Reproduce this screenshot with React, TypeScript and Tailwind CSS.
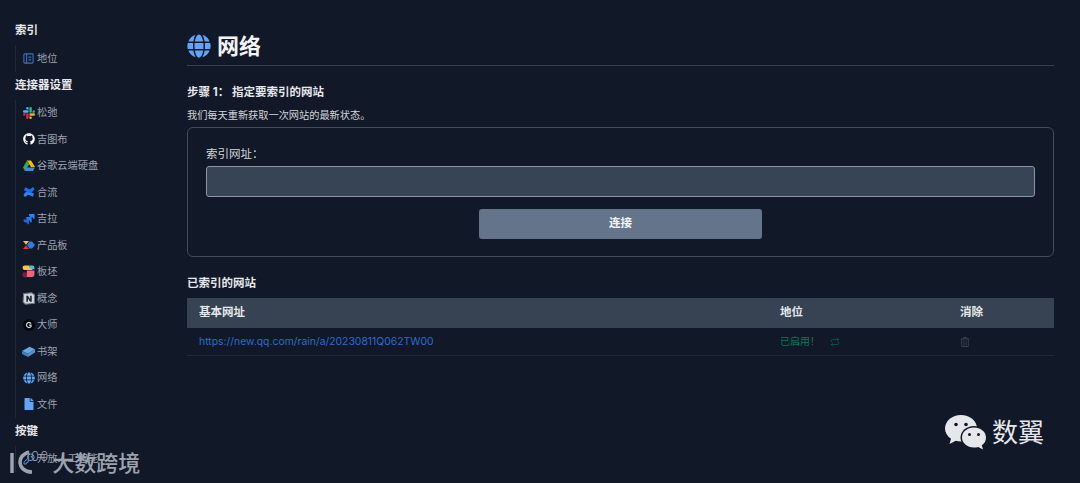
import React from 'react';
import { FaGithub, FaFile, FaGlobe, FaRegTrashAlt } from 'react-icons/fa';
import { Repeat, KeyRound } from 'lucide-react';

const StatusIcon = () => (
  <svg viewBox="0 0 12 12" className="w-[11px] h-[11px]" fill="none" stroke="#3b73b8" strokeWidth="1.200">
    <rect x="1" y="1" width="10" height="10" rx="1" />
    <path d="M4 1v10M6 4.500h3M6 7.500h3" />
  </svg>
);

const Slack = () => (
  <svg viewBox="0 0 24 24" className="w-[12px] h-[12px]">
    <path fill="#e01e5a" d="M5 15a2.5 2.5 0 1 1-2.500-2.500H5V15zm1.300 0a2.500 2.500 0 0 1 5 0v6.500a2.500 2.500 0 0 1-5 0V15z" />
    <path fill="#36c5f0" d="M8.800 5a2.500 2.500 0 1 1 2.500-2.500V5H8.800zm0 1.300a2.500 2.500 0 0 1 0 5H2.500a2.500 2.500 0 0 1 0-5h6.300z" />
    <path fill="#2eb67d" d="M19 8.800a2.500 2.500 0 1 1 2.500 2.500H19V8.800zm-1.300 0a2.500 2.500 0 0 1-5 0V2.500a2.500 2.500 0 0 1 5 0v6.300z" />
    <path fill="#ecb22e" d="M15.200 19a2.500 2.500 0 1 1-2.500 2.500V19h2.500zm0-1.300a2.500 2.500 0 0 1 0-5h6.300a2.500 2.500 0 0 1 0 5h-6.300z" />
  </svg>
);

const Drive = () => (
  <svg viewBox="0 0 24 22" className="w-[12px] h-[11px]">
    <path fill="#fbbc04" d="M8 1h8l8 13h-8z" />
    <path fill="#34a853" d="M8 1l4.500 7.500L4 22l-4-7z" />
    <path fill="#4285f4" d="M7 15h17l-4 7H3z" />
  </svg>
);

const Confluence = () => (
  <svg viewBox="0 0 24 24" className="w-[12px] h-[12px]">
    <path fill="#2684ff" d="M1 18c4-7 8-9 13-6.500l8 4-2.500 6-7-3.500c-2.500-1.200-4-.5-5.500 2L3.500 22z" />
    <path fill="#1d6fe6" d="M23 6c-4 7-8 9-13 6.500l-8-4 2.500-6 7 3.500c2.500 1.200 4 .5 5.500-2L20.500 2z" />
  </svg>
);

const Jira = () => (
  <svg viewBox="0 0 24 24" className="w-[12px] h-[12px]">
    <path fill="#2684ff" d="M12 2h11v10a4 4 0 0 1-4-4h-3a4 4 0 0 1-4-4z" />
    <path fill="#1f78f0" d="M6.500 8h11v11a4 4 0 0 1-4-4h-3a4 4 0 0 1-4-4z" />
    <path fill="#1868db" d="M1 13h11v10a4 4 0 0 1-4-4H5a4 4 0 0 1-4-4z" />
  </svg>
);

const Productboard = () => (
  <svg viewBox="0 0 24 24" className="w-[12px] h-[12px]">
    <path fill="#f6c141" d="M0 4h12l-6 7.500z" />
    <path fill="#e5343b" d="M0 20h12l-6-7.500z" />
    <path fill="#2f7de1" d="M13 5h5l6 7-6 7h-5l-5-7z" />
  </svg>
);

const Slab = () => (
  <svg viewBox="0 0 24 24" className="w-[13px] h-[13px]">
    <path fill="#f6c453" d="M5 1h9v3l5 0v5H5a4 4 0 0 1-4-4 4 4 0 0 1 4-4z" />
    <path fill="#43c2d6" d="M14 1h5a4 4 0 0 1 4 4v3h-7z" />
    <path fill="#7c1d3f" d="M1 14h9v9H5a4 4 0 0 1-4-4z" />
    <path fill="#f0647c" d="M9 10h14v8a4 4 0 0 1-4 4H9z" />
  </svg>
);

const Notion = () => (
  <svg viewBox="0 0 24 24" className="w-[13px] h-[13px]">
    <path fill="#d1d5db" stroke="#6b7280" strokeWidth="2" d="M3 3l15-1.500L23 5v16l-17 1.500L2 18z" />
    <path fill="#1f2937" d="M8 7h3l4 6V7h3v11h-3l-4-6v6H8z" />
  </svg>
);

const Guru = () => (
  <svg viewBox="0 0 24 24" className="w-[12px] h-[12px]">
    <circle cx="12" cy="12" r="12" fill="#05070c" />
    <path fill="none" stroke="#cbd5e1" strokeWidth="2.500" d="M16 9a5 5 0 1 0 0 6v-3h-4" />
  </svg>
);

const Bookstack = () => (
  <svg viewBox="0 0 24 24" className="w-[13px] h-[13px]">
    <path fill="#6ba6e0" d="M0 11l14-8 10 5-13 8z" />
    <path fill="#3f80c8" d="M0 11l11 5v6L1 17a3 3 0 0 1-1-2z" />
    <path fill="#4f91d6" d="M11 16l13-8v6l-13 8z" />
  </svg>
);

const WeChat = () => (
  <svg viewBox="0 0 42 36" className="w-[42px] h-[36px]">
    <path fill="#e5e7eb" d="M16 0C7.500 0 0 5.800 0 13.500c0 4.300 2.400 7.800 6 10.300L4.500 29l6.300-3.300c1.600.4 3.300.7 5.200.7C25 26.400 32 20.500 32 13.200 32 5.800 24.500 0 16 0z" />
    <path fill="#111827" d="M29 11c-7.500 0-13.500 5-13.500 11.500S21.500 34 29 34c9 0 13-5.500 13-11.500S36.500 11 29 11z" />
    <path fill="#e5e7eb" d="M29 12.500c-6.800 0-12 4.400-12 10s5.200 10 12 10c1.500 0 2.900-.2 4.200-.6l4.800 2.600-1.200-4.200C39.600 28.500 41 25.700 41 22.500c0-5.600-5.200-10-12-10z" />
    <circle cx="11" cy="9.500" r="1.800" fill="#111827" />
    <circle cx="21" cy="9.500" r="1.800" fill="#111827" />
    <circle cx="24.500" cy="19.500" r="1.500" fill="#111827" />
    <circle cx="33.500" cy="19.500" r="1.500" fill="#111827" />
  </svg>
);

const indexItems = [{ label: '地位', icon: <StatusIcon /> }];

const connectorItems = [
  { label: '松弛', icon: <Slack /> },
  { label: '吉图布', icon: <FaGithub size={12} className="text-white" /> },
  { label: '谷歌云端硬盘', icon: <Drive /> },
  { label: '合流', icon: <Confluence /> },
  { label: '吉拉', icon: <Jira /> },
  { label: '产品板', icon: <Productboard /> },
  { label: '板坯', icon: <Slab /> },
  { label: '概念', icon: <Notion /> },
  { label: '大师', icon: <Guru /> },
  { label: '书架', icon: <Bookstack /> },
  { label: '网络', icon: <FaGlobe size={12} className="text-[#60a5fa]" /> },
  { label: '文件', icon: <FaFile size={12} className="text-[#60a5fa]" /> },
];

const keyItems = [{ label: '开放人工智能', icon: <KeyRound size={12} className="text-[#60a5fa]" /> }];

const SideGroup = ({ title, items }: { title: string; items: { label: string; icon: React.ReactNode }[] }) => (
  <div>
    <div className="h-[28px] flex items-center text-[11.500px] font-bold text-[#e5e7eb]">{title}</div>
    <div className="border-l border-[#1f2937]">
      {items.map(item => (
        <div key={item.label} className="h-[26.500px] flex items-center pl-[6px] gap-[2px] text-[10.200px] text-[#9ca3af]">
          <span className="w-[13px] flex justify-center">{item.icon}</span>
          {item.label}
        </div>
      ))}
    </div>
  </div>
);

export default function App() {
  return (
    <div
      className="relative w-[1080px] h-[483px] overflow-hidden bg-[#111827] flex"
      style={{ fontFamily: 'Inter, "Noto Sans CJK SC", sans-serif' }}
    >
      {/* Sidebar */}
      <div className="w-[187px] shrink-0 pl-[15px] pt-[17px]">
        <SideGroup title="索引" items={indexItems} />
        <SideGroup title="连接器设置" items={connectorItems} />
        <SideGroup title="按键" items={keyItems} />
      </div>

      {/* Main */}
      <div className="w-[867px] pt-[32px]">
        <div className="flex items-center gap-[6px] h-[28px] mb-[5px] text-[22px] font-bold text-[#f3f4f6]">
          <FaGlobe size={24} className="text-[#60a5fa]" />
          网络
        </div>
        <div className="border-t border-[#374151]" />

        <div className="mt-[18px] text-[11.500px] font-bold text-[#e5e7eb] leading-[16px]">步骤 1： 指定要索引的网站</div>
        <div className="mt-[8px] text-[10.200px] text-[#d1d5db] leading-[14px]">我们每天重新获取一次网站的最新状态。</div>

        <div className="mt-[5px] h-[130px] border border-[#414b5a] rounded-[6px] px-[18px] pt-[18px]">
          <div className="text-[11.500px] text-[#d1d5db] leading-[16px]">索引网址：</div>
          <div className="mt-[4px] h-[31px] bg-[#364456] border border-[#8b95a3] rounded-[3px]" />
          <div className="mt-[12px] flex justify-center">
            <button className="w-[283px] h-[30px] bg-[#64748b] rounded-[3px] text-[11.500px] font-bold text-[#f3f4f6]">连接</button>
          </div>
        </div>

        <div className="mt-[18px] text-[11.500px] font-bold text-[#e5e7eb] leading-[16px]">已索引的网站</div>

        <div className="mt-[7px]">
          <div className="h-[30px] bg-[#374352] grid grid-cols-[581px_180px_1fr] pl-[12px] items-center text-[11.500px] font-bold text-[#e5e7eb]">
            <span>基本网址</span>
            <span>地位</span>
            <span>消除</span>
          </div>
          <div className="h-[28px] grid grid-cols-[581px_180px_1fr] pl-[12px] items-center border-b border-[#1f2937] text-[10.400px]">
            <span className="text-[#2b6cd4]">https://new.qq.com/rain/a/20230811Q062TW00</span>
            <span className="flex items-center gap-[10px] text-[#047857] text-[10px]">
              已启用！
              <Repeat size={10} className="text-[#065f46]" />
            </span>
            <span><FaRegTrashAlt size={10} className="text-[#374151]" /></span>
          </div>
        </div>
      </div>

      {/* Watermarks */}
      <div className="absolute left-[945px] top-[415px] flex items-center gap-[5px]">
        <WeChat />
        <span className="text-[26px] text-[#e5e7eb] leading-[36px]">数翼</span>
      </div>
      <div className="absolute left-[9px] top-[450px] flex items-start text-[#9ca3af]">
        <svg viewBox="0 0 24 25" className="w-[24px] h-[25px]" fill="none" stroke="#9ca3af" strokeWidth="3.500">
          <path d="M3 3v20" />
          <path d="M20 2c-6 2-9 5-9 10s4 10 12 10" />
        </svg>
        <span className="text-[13px] font-light leading-[12px] -ml-[8px] tracking-[1px]">100</span>
        <span className="text-[22px] font-medium leading-[26px] ml-[3px]">大数跨境</span>
      </div>
    </div>
  );
}
